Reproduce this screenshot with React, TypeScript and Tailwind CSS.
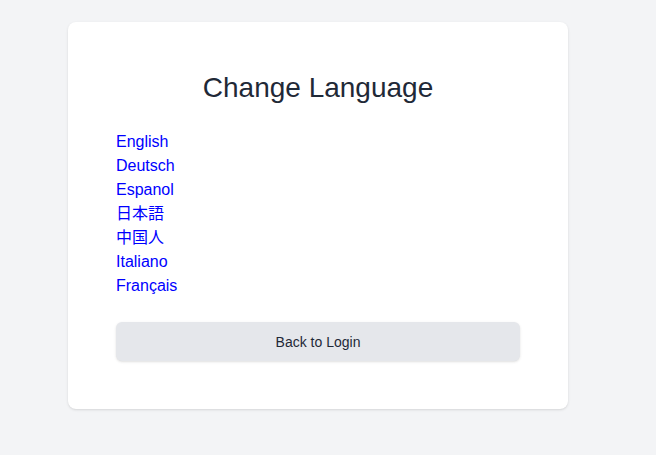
import React from "react";

const langs = ["English", "Deutsch", "Espanol", "日本語", "中国人", "Italiano", "Français"];

export default function App() {
  return (
    <div
      className="min-h-screen bg-[#f3f4f6] pt-[22px] pl-[68px]"
      style={{ fontFamily: '"Liberation Sans", Arial, "Noto Sans CJK SC", sans-serif' }}
    >
      <div className="w-[500px] rounded-lg bg-white p-12 shadow">
        <h1 className="mb-6 text-center text-[28px] leading-[36px] text-[#1f2937]">Change Language</h1>
        <ul className="flex flex-col">
          {langs.map((l) => (
            <li key={l} className="text-base leading-6">
              <a href="#" className="text-[#0000ff]" style={{ fontFamily: '"Liberation Sans", Arial, "Noto Sans CJK JP", sans-serif' }}>
                {l}
              </a>
            </li>
          ))}
        </ul>
        <button className="mt-6 h-[39px] w-full rounded-md bg-[#e5e7eb] text-sm text-[#1f2937] shadow-sm">
          Back to Login
        </button>
      </div>
    </div>
  );
}
